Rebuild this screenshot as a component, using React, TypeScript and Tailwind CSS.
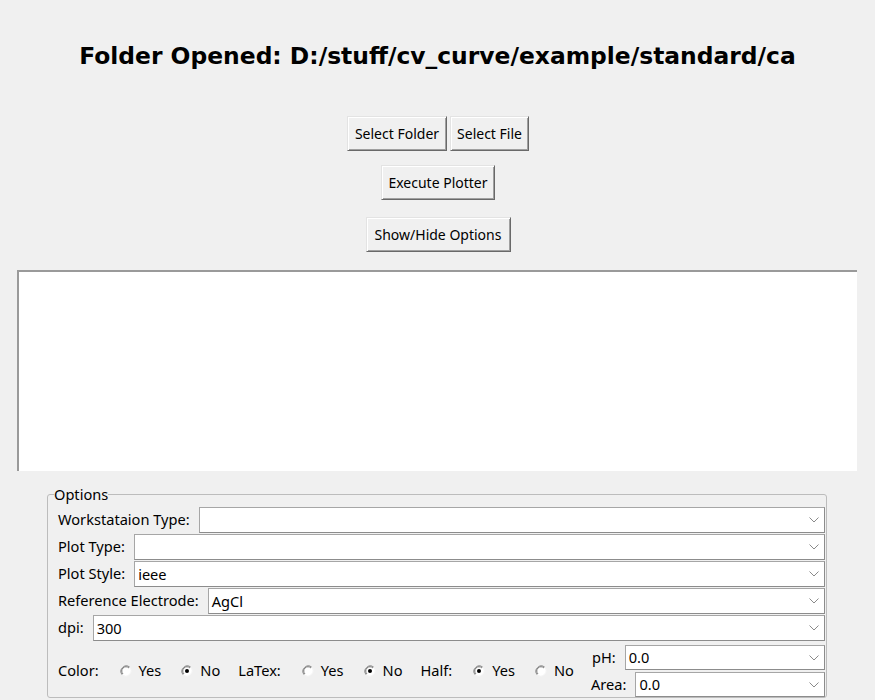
const ui = { fontFamily: '"Noto Sans", "Liberation Sans", sans-serif' };

function TkButton({ label, w }: { label: string; w: string }) {
  return (
    <button
      className={`${w} h-[35px] bg-[#f0f0f0] text-[14px] leading-none text-black border border-t-[#e3e3e3] border-l-[#e3e3e3] border-r-[#696969] border-b-[#696969] shadow-[inset_1px_1px_0_#ffffff,inset_-1px_-1px_0_#a0a0a0]`}
    >
      {label}
    </button>
  );
}

function Chevron() {
  return (
    <svg width="10" height="6" viewBox="0 0 10 6" className="shrink-0">
      <path d="M0.5 0.5 L5 5 L9.5 0.5" fill="none" stroke="#8a8a8a" strokeWidth="1" />
    </svg>
  );
}

function Combo({ value, h = "h-[26px]" }: { value?: string; h?: string }) {
  return (
    <div
      className={`flex-1 ${h} flex items-center bg-white border border-[#a6a6a6] border-b-[#8c8c8c] border-r-[#8c8c8c] pl-[3px] pr-[5px]`}
    >
      <span className="flex-1 text-[14.6px] leading-none text-black">{value}</span>
      <Chevron />
    </div>
  );
}

function Row({ label, value }: { label: string; value?: string }) {
  return (
    <div className="flex items-center gap-[9px] h-[26px]">
      <span className="text-[14.6px] text-black whitespace-nowrap">{label}</span>
      <Combo value={value} />
    </div>
  );
}

function Radio({ label, checked }: { label: string; checked?: boolean }) {
  return (
    <div className="flex items-center gap-[7px]">
      <svg width="12" height="12" viewBox="0 0 12 12" className="shrink-0">
        <circle cx="6" cy="6" r="5" fill="#ffffff" />
        <path d="M2.2 9.8 A5.4 5.4 0 0 1 9.8 2.2" fill="none" stroke="#8a8a8a" strokeWidth="1" />
        <path d="M3 9 A4.2 4.2 0 0 1 9 3" fill="none" stroke="#5a5a5a" strokeWidth="0.8" />
        <path d="M9.8 2.2 A5.4 5.4 0 0 1 2.2 9.8" fill="none" stroke="#f4f4f4" strokeWidth="1" />
        {checked && <circle cx="6" cy="6" r="2" fill="#000000" />}
      </svg>
      <span className="text-[14.6px] text-black">{label}</span>
    </div>
  );
}

export default function App() {
  return (
    <div className="w-[875px] h-[700px] overflow-hidden bg-[#f0f0f0] flex flex-col" style={ui}>
      <h1
        className="pt-[42px] text-center text-[23.4px] leading-[28px] font-bold text-black"
        style={{ fontFamily: '"DejaVu Sans", Verdana, sans-serif' }}
      >
        Folder Opened: D:/stuff/cv_curve/example/standard/ca
      </h1>

      <div className="mt-[46px] flex justify-center gap-[3px] pl-[1px]">
        <TkButton label="Select Folder" w="w-[100px]" />
        <TkButton label="Select File" w="w-[79px]" />
      </div>
      <div className="mt-[14px] flex justify-center pl-[1px]">
        <TkButton label="Execute Plotter" w="w-[114px]" />
      </div>
      <div className="mt-[17px] flex justify-center pl-[1px]">
        <TkButton label="Show/Hide Options" w="w-[145px]" />
      </div>

      <div className="mt-[18px] ml-[17px] w-[840px] h-[201px] shrink-0 bg-white border-t-2 border-l-2 border-t-[#9a9a9a] border-l-[#9a9a9a]" />

      <fieldset className="mt-[14px] ml-[47px] w-[780px] border border-[#bcbcbc] rounded-[3px] pl-[10px] pr-[1px] pt-[4px] pb-0">
        <legend className="ml-[-4px] px-0 text-[14.6px] leading-[18px] text-black">Options</legend>
        <div className="flex flex-col gap-[1px]">
          <Row label="Workstataion Type:" />
          <Row label="Plot Type:" />
          <Row label="Plot Style:" value="ieee" />
          <Row label="Reference Electrode:" value="AgCl" />
          <Row label="dpi:" value="300" />
        </div>
        <div className="mt-[4px] flex items-center h-[52px]">
          <div className="flex-1 flex items-center text-[14.6px] text-black">
            <span>Color:</span>
            <div className="ml-[21px]"><Radio label="Yes" /></div>
            <div className="ml-[20px]"><Radio label="No" checked /></div>
            <span className="ml-[18px]">LaTex:</span>
            <div className="ml-[21px]"><Radio label="Yes" /></div>
            <div className="ml-[20px]"><Radio label="No" checked /></div>
            <span className="ml-[18px]">Half:</span>
            <div className="ml-[21px]"><Radio label="Yes" checked /></div>
            <div className="ml-[20px]"><Radio label="No" /></div>
          </div>
          <div className="w-[234px] flex flex-col gap-[2px]">
            <div className="flex items-center gap-[9px]">
              <span className="text-[14.6px] text-black ml-[1px]">pH:</span>
              <Combo value="0.0" h="h-[25px]" />
            </div>
            <div className="flex items-center gap-[9px]">
              <span className="text-[14.6px] text-black">Area:</span>
              <Combo value="0.0" h="h-[25px]" />
            </div>
          </div>
        </div>
      </fieldset>
    </div>
  );
}
